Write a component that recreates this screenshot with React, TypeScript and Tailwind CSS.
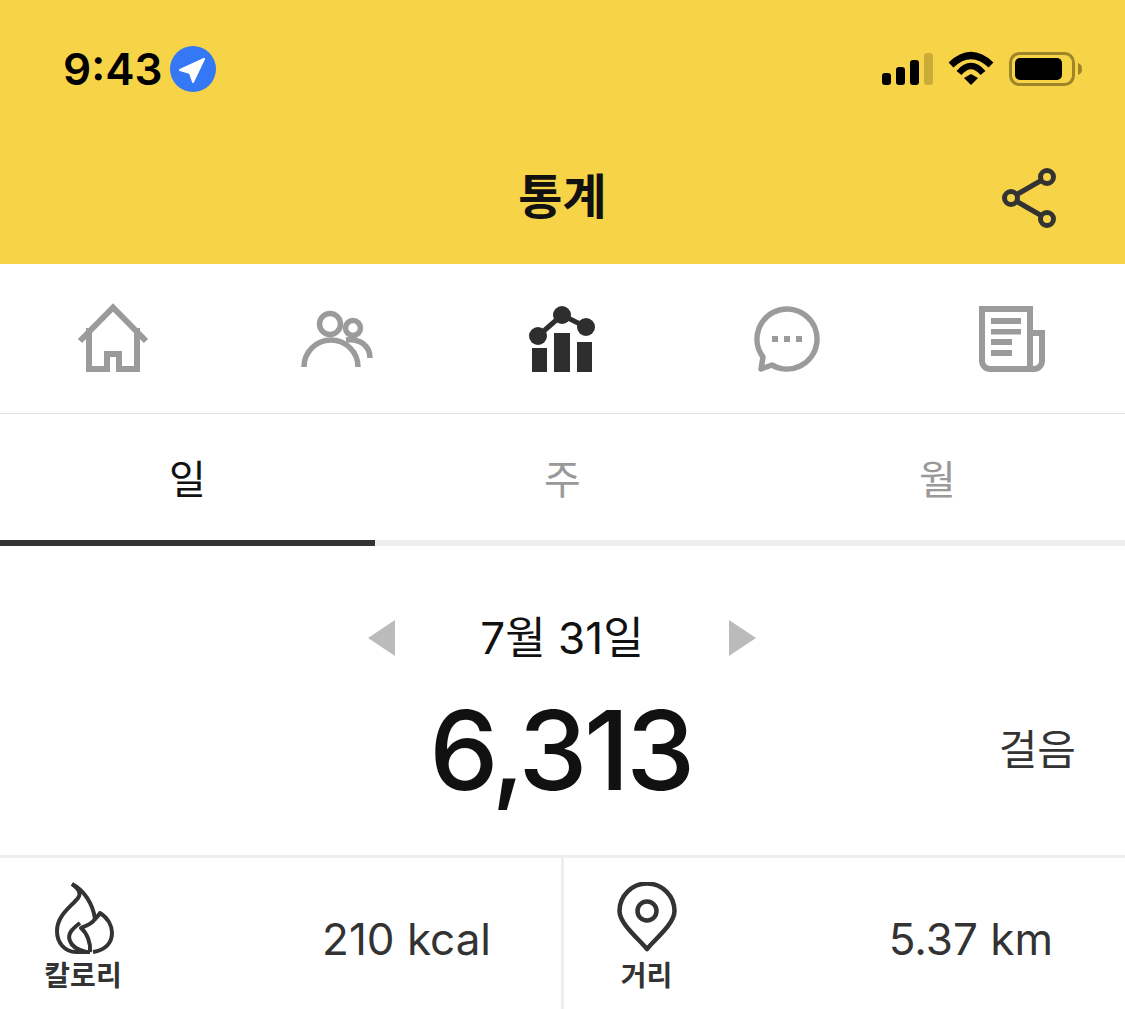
export default function App() {
  const gray = "#9b9b9b";
  return (
    <div className="w-[1125px] h-[1009px] overflow-hidden bg-white font-['Inter','Noto_Sans_CJK_KR',sans-serif]">
      <header className="h-[264px] bg-[#f7d347] flex flex-col">
        <div className="h-[130px] pt-[8px] pl-[63px] pr-[43px] flex items-center justify-between">
          <div className="flex items-center gap-[8px]">
            <span className="text-[44px] leading-none font-semibold text-black">9:43</span>
            <svg width="46" height="46" viewBox="171 45 46 46">
              <circle cx="194" cy="68" r="23" fill="#3478f6" />
              <path d="M205 58 L181 69 L191 72 L194 81 Z" fill="#fff" stroke="#fff" strokeWidth="2" strokeLinejoin="round" />
            </svg>
          </div>
          <svg width="200" height="40" viewBox="882 49 200 40">
            <rect x="882" y="73" width="9" height="12" rx="3" fill="#000" />
            <rect x="896" y="67" width="9" height="18" rx="3" fill="#000" />
            <rect x="910" y="60" width="9" height="25" rx="3" fill="#000" />
            <rect x="924" y="53" width="9" height="32" rx="3" fill="#c9ac37" />
            <path d="M951 65 Q971 46 991 65" fill="none" stroke="#000" strokeWidth="7" />
            <path d="M959 73 Q971 59 983 73" fill="none" stroke="#000" strokeWidth="6.5" />
            <path d="M964 78 L971 74 L978 78 L971 85 Z" fill="#000" />
            <rect x="1010.5" y="53.5" width="63" height="31" rx="9" fill="none" stroke="#9e8528" strokeWidth="3" />
            <rect x="1015" y="58" width="47" height="22" rx="5" fill="#000" />
            <path d="M1078 63 C1081 64 1082 66 1082 69 C1082 72 1081 74 1078 75 Z" fill="#9e8528" />
          </svg>
        </div>
        <div className="relative flex-1 flex items-center justify-center">
          <h1 className="text-[48px] leading-none font-bold text-[#111]">통계</h1>
          <svg className="absolute left-[1000px] top-[36px]" width="58" height="62" viewBox="1000 166 58 62">
            <g fill="none" stroke="#333" strokeWidth="5">
              <path d="M1016 195 L1042 180 M1016 201 L1042 216" />
              <circle cx="1047" cy="177" r="6.5" />
              <circle cx="1011" cy="198" r="6.5" />
              <circle cx="1047" cy="219" r="6.5" />
            </g>
          </svg>
        </div>
      </header>

      <nav className="h-[150px] border-b border-[#e2e2e2] flex">
        <div className="flex-1 flex items-center justify-center">
          <svg width="80" height="80" viewBox="72 299 80 80" fill="none" stroke={gray} strokeWidth="6">
            <path d="M79 341 L112 307.5 L145 341" />
            <path d="M88 328 V369 H106 V354 H118 V369 H136 V328" />
          </svg>
        </div>
        <div className="flex-1 flex items-center justify-center">
          <svg width="80" height="80" viewBox="298 299 80 80" fill="none" stroke={gray} strokeWidth="5.5">
            <circle cx="330" cy="324" r="10.5" />
            <circle cx="353" cy="328" r="7.5" />
            <path d="M304 367 A27 27 0 0 1 358 367" />
            <path d="M346 340 C360 338 370 346 370 358" />
          </svg>
        </div>
        <div className="flex-1 flex items-center justify-center">
          <svg width="80" height="80" viewBox="523 299 80 80" fill="#2e2e2e">
            <rect x="532" y="348" width="15" height="24" />
            <rect x="554" y="333" width="16" height="39" />
            <rect x="577" y="342" width="15" height="30" />
            <path d="M538 336 L562 315 L586 327" fill="none" stroke="#2e2e2e" strokeWidth="5" />
            <circle cx="538" cy="336" r="9" />
            <circle cx="562" cy="315" r="9" />
            <circle cx="586" cy="327" r="9" />
          </svg>
        </div>
        <div className="flex-1 flex items-center justify-center">
          <svg width="80" height="80" viewBox="748 299 80 80" fill="none" stroke={gray} strokeWidth="5.5" strokeLinejoin="round">
            <path d="M772 365 A30 30 0 1 0 763 357 L761 369 Z" />
            <g fill={gray} stroke="none">
              <rect x="772" y="336" width="6" height="6" />
              <rect x="784" y="336" width="6" height="6" />
              <rect x="796" y="336" width="6" height="6" />
            </g>
          </svg>
        </div>
        <div className="flex-1 flex items-center justify-center">
          <svg width="80" height="80" viewBox="973 299 80 80" fill="none" stroke={gray} strokeWidth="6">
            <path d="M1030 333 H1042 V361 A8 8 0 0 1 1034 369 H990 A8 8 0 0 1 982 361 V309 H1030 V369" />
            <g fill={gray} stroke="none">
              <rect x="991" y="318" width="30" height="6" />
              <rect x="991" y="329" width="30" height="5.5" />
              <rect x="991" y="339" width="21" height="6" />
              <rect x="991" y="350" width="21" height="6" />
            </g>
          </svg>
        </div>
      </nav>

      <div className="h-[132px] flex">
        <div className="flex-1 pt-[6px] border-b-[6px] border-[#333] flex items-center justify-center text-[40px] leading-none text-[#111]">일</div>
        <div className="flex-1 pt-[6px] border-b-[6px] border-[#eeeeee] flex items-center justify-center text-[40px] leading-none text-[#999]">주</div>
        <div className="flex-1 pt-[6px] border-b-[6px] border-[#eeeeee] flex items-center justify-center text-[40px] leading-none text-[#999]">월</div>
      </div>

      <section className="h-[312px] border-b-[3px] border-[#eeeeee] pt-[68px]">
        <div className="h-[48px] pr-[1px] flex items-center justify-center gap-[17px]">
          <div className="w-0 h-0 border-y-[18px] border-y-transparent border-r-[27px] border-r-[#bbbbbb]" />
          <span className="w-[300px] text-center text-[44px] leading-none text-[#111]">7월 31일</span>
          <div className="w-0 h-0 border-y-[18px] border-y-transparent border-l-[27px] border-l-[#bbbbbb]" />
        </div>
        <div className="mt-[28px] grid grid-cols-[1fr_auto_1fr] items-center">
          <div />
          <span className="-ml-[4px] text-[110px] leading-[120px] font-medium text-[#111] tracking-[-3.5px]">6,313</span>
          <span className="justify-self-end pr-[49px] text-[42px] leading-none text-[#333]">걸음</span>
        </div>
      </section>

      <section className="h-[151px] flex">
        <div className="w-[564px] pt-[8px] border-r-[3px] border-[#eeeeee] pl-[44px] pr-[70px] flex items-center justify-between">
          <div className="flex flex-col items-center w-[78px]">
            <svg width="62" height="72" viewBox="52 881 62 72" fill="none" stroke="#333" strokeWidth="4" strokeLinejoin="round" className="mb-[4px]">
              <path d="M72 883 C80 889 81 893 78 897 C72 905 57 914 57 930 C57 942 65 951 76 951 L90 951" />
              <path d="M72 883 C84 889 93 903 95 918 C97 916 99 914 100 912 C108 917 112 925 112 932 C112 942 105 949 93 951" />
              <path d="M95 918 C92 923 86 925 81 927 C87 932 91 942 90 951" />
              <path d="M80 922 C72 928 67 933 70 940 C72 946 78 949 86 951" />
            </svg>
            <span className="text-[28px] leading-[36px] font-bold text-[#333]">칼로리</span>
          </div>
          <span className="pt-[2px] text-[44px] leading-none text-[#333]">210 kcal</span>
        </div>
        <div className="flex-1 pt-[8px] pl-[52px] pr-[72px] flex items-center justify-between">
          <div className="flex flex-col items-center">
            <svg width="62" height="74" viewBox="616 883 62 74" fill="none" stroke="#333" strokeWidth="4.5" className="mb-[2px]">
              <path d="M647 950 C640 941 619.5 925 619.5 912 A27.5 27.5 0 0 1 674.5 912 C674.5 925 654 941 647 950 Z" strokeLinejoin="round" />
              <circle cx="647" cy="912" r="9.5" />
            </svg>
            <span className="-ml-[1px] text-[28px] leading-[36px] font-bold text-[#333]">거리</span>
          </div>
          <span className="pt-[2px] text-[44px] leading-none text-[#333]">5.37 km</span>
        </div>
      </section>
    </div>
  );
}
